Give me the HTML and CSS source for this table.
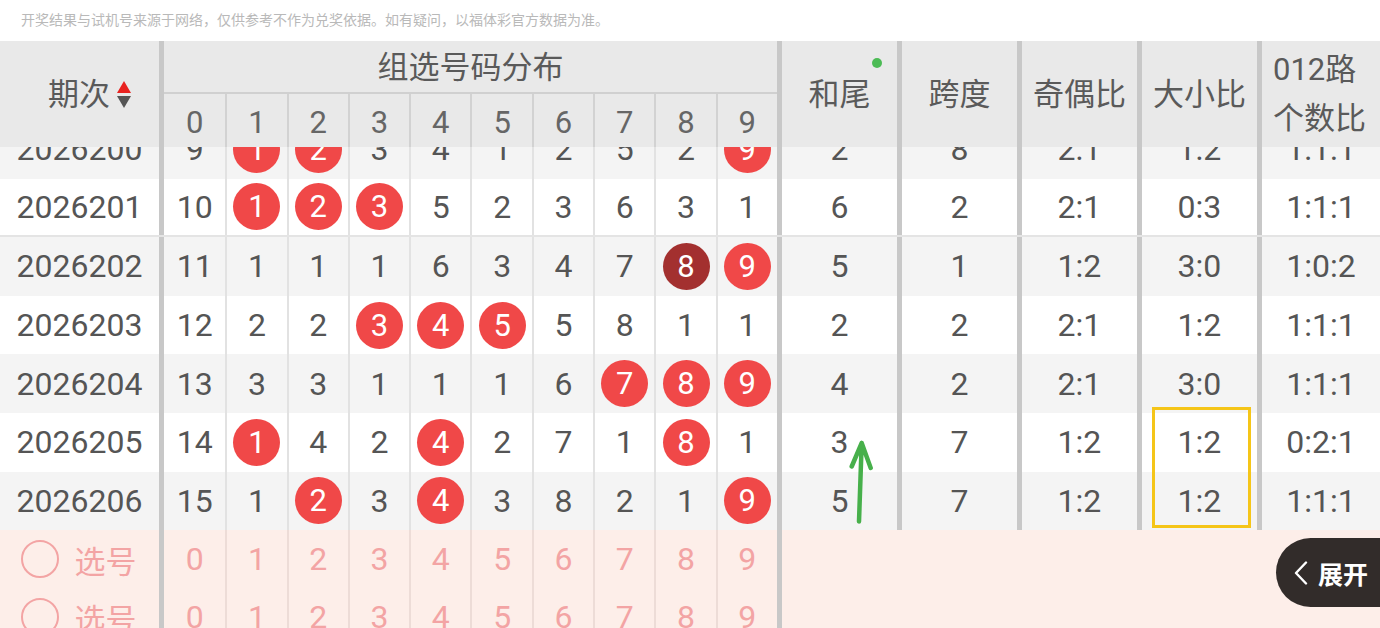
FILE: index.html
```html
<!DOCTYPE html>
<html lang="zh-CN">
<head>
<meta charset="utf-8">
<title>组选号码分布</title>
<link rel="stylesheet" href="styles.css">
</head>
<body>
<div class="page">
  <p class="notice">开奖结果与试机号来源于网络，仅供参考不作为兑奖依据。如有疑问，以福体彩官方数据为准。</p>
  <div class="thead">
    <div class="th th-period"><span class="th-label">期次</span><span class="sort"><i class="up"></i><i class="down"></i></span></div>
    <div class="th th-group">组选号码分布</div>
    <div class="th th-digit">0</div>
    <div class="th th-digit">1</div>
    <div class="th th-digit">2</div>
    <div class="th th-digit">3</div>
    <div class="th th-digit">4</div>
    <div class="th th-digit">5</div>
    <div class="th th-digit">6</div>
    <div class="th th-digit">7</div>
    <div class="th th-digit">8</div>
    <div class="th th-digit">9</div>
    <div class="th th-stat th-hw">和尾<span class="dot"></span></div>
    <div class="th th-stat">跨度</div>
    <div class="th th-stat">奇偶比</div>
    <div class="th th-stat">大小比</div>
    <div class="th th-stat th-lu"><span class="lu-text">012路<br>个数比</span></div>
  </div>
  <div class="viewport">
    <div class="tbody">
      <div class="row alt">
        <div class="c period">2026200</div>
        <div class="c n">9</div><div class="c n"><span class="ball">1</span></div><div class="c n"><span class="ball">2</span></div><div class="c n">3</div><div class="c n">4</div><div class="c n">1</div><div class="c n">2</div><div class="c n">5</div><div class="c n">2</div><div class="c n"><span class="ball">9</span></div>
        <div class="c s">2</div><div class="c s">8</div><div class="c s">2:1</div><div class="c s">1:2</div><div class="c s">1:1:1</div>
      </div>
      <div class="row sep">
        <div class="c period">2026201</div>
        <div class="c n">10</div><div class="c n"><span class="ball">1</span></div><div class="c n"><span class="ball">2</span></div><div class="c n"><span class="ball">3</span></div><div class="c n">5</div><div class="c n">2</div><div class="c n">3</div><div class="c n">6</div><div class="c n">3</div><div class="c n">1</div>
        <div class="c s">6</div><div class="c s">2</div><div class="c s">2:1</div><div class="c s">0:3</div><div class="c s">1:1:1</div>
      </div>
      <div class="row alt">
        <div class="c period">2026202</div>
        <div class="c n">11</div><div class="c n">1</div><div class="c n">1</div><div class="c n">1</div><div class="c n">6</div><div class="c n">3</div><div class="c n">4</div><div class="c n">7</div><div class="c n"><span class="ball dark">8</span></div><div class="c n"><span class="ball">9</span></div>
        <div class="c s">5</div><div class="c s">1</div><div class="c s">1:2</div><div class="c s">3:0</div><div class="c s">1:0:2</div>
      </div>
      <div class="row">
        <div class="c period">2026203</div>
        <div class="c n">12</div><div class="c n">2</div><div class="c n">2</div><div class="c n"><span class="ball">3</span></div><div class="c n"><span class="ball">4</span></div><div class="c n"><span class="ball">5</span></div><div class="c n">5</div><div class="c n">8</div><div class="c n">1</div><div class="c n">1</div>
        <div class="c s">2</div><div class="c s">2</div><div class="c s">2:1</div><div class="c s">1:2</div><div class="c s">1:1:1</div>
      </div>
      <div class="row alt">
        <div class="c period">2026204</div>
        <div class="c n">13</div><div class="c n">3</div><div class="c n">3</div><div class="c n">1</div><div class="c n">1</div><div class="c n">1</div><div class="c n">6</div><div class="c n"><span class="ball">7</span></div><div class="c n"><span class="ball">8</span></div><div class="c n"><span class="ball">9</span></div>
        <div class="c s">4</div><div class="c s">2</div><div class="c s">2:1</div><div class="c s">3:0</div><div class="c s">1:1:1</div>
      </div>
      <div class="row">
        <div class="c period">2026205</div>
        <div class="c n">14</div><div class="c n"><span class="ball">1</span></div><div class="c n">4</div><div class="c n">2</div><div class="c n"><span class="ball">4</span></div><div class="c n">2</div><div class="c n">7</div><div class="c n">1</div><div class="c n"><span class="ball">8</span></div><div class="c n">1</div>
        <div class="c s">3</div><div class="c s">7</div><div class="c s">1:2</div><div class="c s">1:2</div><div class="c s">0:2:1</div>
      </div>
      <div class="row alt">
        <div class="c period">2026206</div>
        <div class="c n">15</div><div class="c n">1</div><div class="c n"><span class="ball">2</span></div><div class="c n">3</div><div class="c n"><span class="ball">4</span></div><div class="c n">3</div><div class="c n">8</div><div class="c n">2</div><div class="c n">1</div><div class="c n"><span class="ball">9</span></div>
        <div class="c s">5</div><div class="c s">7</div><div class="c s">1:2</div><div class="c s">1:2</div><div class="c s">1:1:1</div>
      </div>
    </div>
    <div class="pick">
      <div class="pick-row">
        <div class="c pick-label"><span class="radio"></span><span>选号</span></div>
        <div class="c n">0</div><div class="c n">1</div><div class="c n">2</div><div class="c n">3</div><div class="c n">4</div><div class="c n">5</div><div class="c n">6</div><div class="c n">7</div><div class="c n">8</div><div class="c n">9</div>
        <div class="c pick-rest"></div>
      </div>
      <div class="pick-row">
        <div class="c pick-label"><span class="radio"></span><span>选号</span></div>
        <div class="c n">0</div><div class="c n">1</div><div class="c n">2</div><div class="c n">3</div><div class="c n">4</div><div class="c n">5</div><div class="c n">6</div><div class="c n">7</div><div class="c n">8</div><div class="c n">9</div>
        <div class="c pick-rest"></div>
      </div>
    </div>
  </div>

  <div class="highlight"></div>
  <svg class="arrow" width="32" height="90" viewBox="0 0 32 90" aria-hidden="true">
    <path d="M14 83.5 L16.7 5 M6.7 28.5 L16.7 5 L25.7 30" fill="none" stroke="#47b04b" stroke-width="4.5" stroke-linecap="round" stroke-linejoin="round"/>
  </svg>
  <div class="expand">
    <svg class="chev" width="16" height="24" viewBox="0 0 16 24" aria-hidden="true"><path d="M13 1.5 L3 12 L13 22.5" fill="none" stroke="#fff" stroke-width="2.4" stroke-linecap="round" stroke-linejoin="round"/></svg>
    <span>展开</span>
  </div>
</div>
</body>
</html>
```

FILE: styles.css
```css
* { box-sizing: border-box; }
html, body { margin: 0; padding: 0; }
body {
  width: 1380px;
  height: 628px;
  overflow: hidden;
  background: #fff;
  font-family: Roboto, "Noto Sans CJK SC", sans-serif;
  color: #555;
}
.page {
  position: relative;
  width: 1380px;
  height: 628px;
  overflow: hidden;
}
.notice {
  margin: 0;
  height: 41px;
  padding: 11px 0 0 21px;
  font-family: "Noto Sans CJK SC", sans-serif;
  font-size: 14px;
  line-height: 16px;
  color: #b9b9b9;
  white-space: nowrap;
}

/* shared column grid */
.thead, .row, .pick-row {
  display: grid;
  grid-template-columns: 164px repeat(10, 61.3px) repeat(4, 120px) 1fr;
}

/* header */
.thead {
  grid-template-rows: 53px 53px;
  background: #e9e9e9;
  color: #5a5a5a;
  font-size: 31px;
}
.th {
  display: flex;
  align-items: center;
  justify-content: center;
  line-height: 1;
}
.th-period {
  grid-row: 1 / 3;
  grid-column: 1;
  border-right: 5px solid #c8c8c8;
}
.sort {
  display: flex;
  flex-direction: column;
  gap: 3px;
  margin-left: 7px;
  margin-right: -20px;
}
.sort i { display: block; width: 0; height: 0; }
.sort .up {
  border-left: 7px solid transparent;
  border-right: 7px solid transparent;
  border-bottom: 12px solid #e8221f;
}
.sort .down {
  border-left: 7px solid transparent;
  border-right: 7px solid transparent;
  border-top: 12px solid #555;
}
.th-group {
  grid-row: 1;
  grid-column: 2 / 12;
  border-bottom: 2px solid #d0d0d0;
  padding-top: 2px;
}
.th-digit {
  grid-row: 2;
  color: #666;
  font-size: 31px;
  padding-top: 3px;
}
.th-digit + .th-digit { border-left: 2px solid #d2d2d2; }
.th-stat {
  grid-row: 1 / 3;
  border-left: 5px solid #c8c8c8;
}
.th-hw { position: relative; }
.dot {
  position: absolute;
  top: 17px;
  right: 15px;
  width: 10px;
  height: 10px;
  border-radius: 50%;
  background: #4cbb55;
}
.th-lu { justify-content: flex-start; padding-left: 11px; }
.lu-text { line-height: 49px; text-align: left; }

/* body */
.viewport {
  height: 481px;
  overflow: hidden;
}
.tbody { margin-top: -27px; }
.row {
  height: 58.6px;
  background: #fff;
}
.row.alt { background: #f4f4f4; }
.row.sep { border-bottom: 2px solid #e4e4e4; }
.c {
  display: flex;
  align-items: center;
  justify-content: center;
  font-size: 32px;
  line-height: 1;
  color: #555;
}
.period { border-right: 5px solid #c8c8c8; }
.n + .n { border-left: 2px solid #e2e2e2; }
.s { border-left: 5px solid #c8c8c8; }
.ball {
  display: flex;
  align-items: center;
  justify-content: center;
  width: 47px;
  height: 47px;
  border-radius: 50%;
  background: #f04848;
  color: #fff;
  font-size: 31px;
}
.ball.dark { background: #a3302f; }

/* pick rows */
.pick { background: #fdeee9; }
.pick-row { height: 58px; }
.pick-row .c { color: #f3a4a4; }
.pick-row .n + .n { border-left: 2px solid #eddcd7; }
.pick-label {
  border-right: 5px solid #c8c8c8;
  gap: 16px;
  font-family: "Noto Sans CJK SC", sans-serif;
  font-size: 31px;
  padding-right: 2px;
}
.radio {
  width: 38px;
  height: 38px;
  border-radius: 50%;
  border: 2px solid #f3a4a4;
}
.pick-rest {
  grid-column: 12 / 17;
  border-left: 5px solid #c8c8c8;
}

/* overlays */
.highlight {
  position: absolute;
  left: 1152px;
  top: 407px;
  width: 99px;
  height: 121px;
  border: 3px solid #f5c518;
}
.arrow {
  position: absolute;
  left: 845px;
  top: 438px;
}
.expand {
  position: absolute;
  right: 0;
  top: 538px;
  width: 104px;
  height: 69px;
  border-radius: 35px 0 0 35px;
  background: #322c2a;
  color: #fff;
  display: flex;
  align-items: center;
  padding-left: 17px;
  gap: 9px;
  font-family: "Noto Sans CJK SC", sans-serif;
  font-size: 25px;
  font-weight: 700;
}
.chev { display: block; }
```
